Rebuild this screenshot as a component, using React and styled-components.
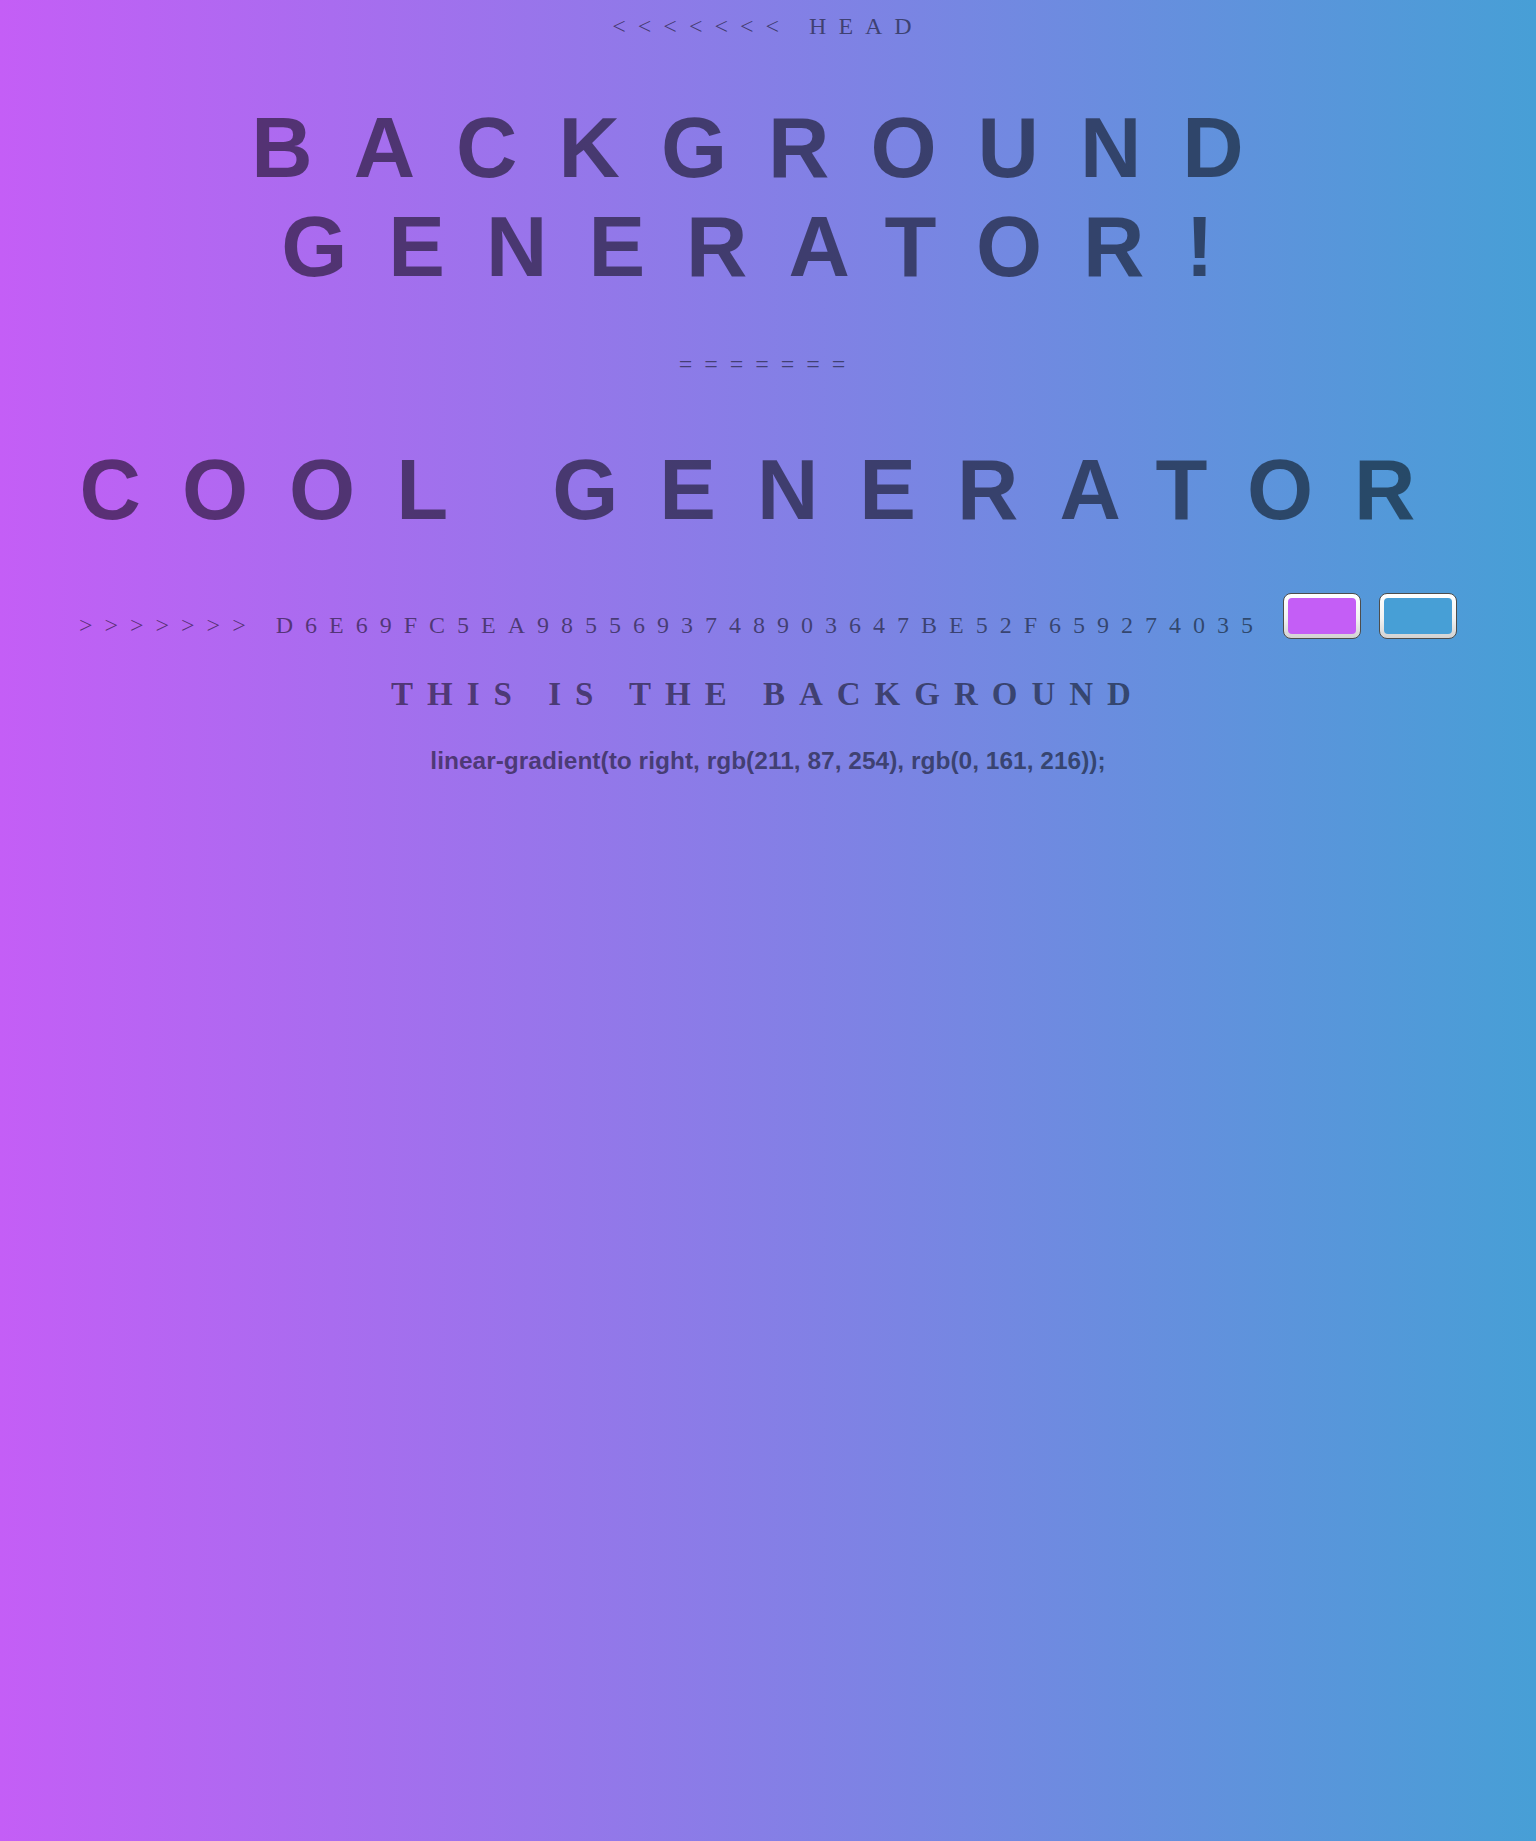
import {useState} from 'react';
import styled, {createGlobalStyle} from 'styled-components';

const GlobalStyle = createGlobalStyle`
	html, body {
		margin: 0;
		padding: 0;
	}

	body {
		min-height: 100vh;
		background: linear-gradient(to right, var(--left), var(--right));
		background-attachment: fixed;
	}
`;

const Page = styled.main`
	--ink: rgba(0, 0, 0, 0.52);

	display: flex;
	flex-direction: column;
	align-items: center;
	padding-top: 14px;
	color: var(--ink);
	text-align: center;
`;

const Marker = styled.div`
	margin-top: ${props => props.$gap || 0}px;
	font-family: "Liberation Serif", "Times New Roman", serif;
	font-size: 24px;
	line-height: 24px;
	letter-spacing: 12px;
	white-space: pre;
`;

const Title = styled.h1`
	margin: ${props => props.$gap}px 0 0;
	font-family: "Liberation Sans", Arial, sans-serif;
	font-size: 85px;
	font-weight: 700;
	line-height: 99px;
	letter-spacing: 41px;
	white-space: nowrap;
`;

const PickerRow = styled.div`
	display: flex;
	align-items: flex-end;
	gap: 18px;
	margin-top: 54px;
`;

const Hex = styled.span`
	font-family: "Liberation Serif", "Times New Roman", serif;
	font-size: 24px;
	line-height: 27px;
	letter-spacing: 12px;
	white-space: pre;
`;

const Swatch = styled.input.attrs({type: 'color'})`
	-webkit-appearance: none;
	appearance: none;
	box-sizing: border-box;
	width: 78px;
	height: 46px;
	margin: 0;
	padding: 4px;
	border: 1.5px solid #4d4d4d;
	border-radius: 8px;
	background: linear-gradient(#ffffff 0%, #f2f2f2 55%, #d2d2d2 100%);
	cursor: pointer;

	&::-webkit-color-swatch-wrapper {
		padding: 0;
	}

	&::-webkit-color-swatch {
		border: none;
		border-radius: 4px;
	}
`;

const Subtitle = styled.h3`
	margin: 39px 0 0;
	font-family: "Liberation Serif", "Times New Roman", serif;
	font-size: 33px;
	font-weight: 700;
	line-height: 33px;
	letter-spacing: 14px;
`;

const Css = styled.h3`
	margin: 38px 0 0;
	font-family: "Liberation Sans", Arial, sans-serif;
	font-size: 24.5px;
	font-weight: 700;
	line-height: 24px;
`;

const App = () => {
	const [left, setLeft] = useState('#c45ef6');
	const [right, setRight] = useState('#479fd6');

	return (
		<>
			<GlobalStyle />
			<style>{`:root { --left: ${left}; --right: ${right}; }`}</style>
			<Page>
				<Marker>{'<<<<<<< HEAD'}</Marker>
				<Title $gap={60}>
					BACKGROUND<br />GENERATOR!
				</Title>
				<Marker $gap={56}>=======</Marker>
				<Title $gap={64}>COOL GENERATOR</Title>
				<PickerRow>
					<Hex>{'>>>>>>> D6E69FC5EA9855693748903647BE52F659274035'}</Hex>
					<Swatch value={left} onChange={e => setLeft(e.target.value)} />
					<Swatch value={right} onChange={e => setRight(e.target.value)} />
				</PickerRow>
				<Subtitle>THIS IS THE BACKGROUND</Subtitle>
				<Css>linear-gradient(to right, rgb(211, 87, 254), rgb(0, 161, 216));</Css>
			</Page>
		</>
	);
}

export default App;
